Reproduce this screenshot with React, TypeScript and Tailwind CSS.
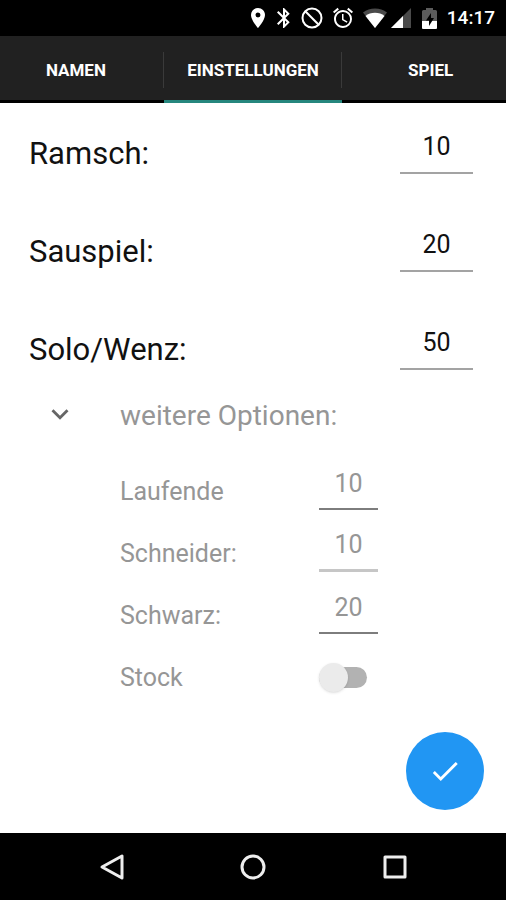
// ReactJS
import { useState } from "react";

// Icons
import { MdAccessAlarm, MdBluetooth, MdCheck, MdKeyboardArrowDown, MdLocationOn } from "react-icons/md";

const TABS = ["NAMEN", "EINSTELLUNGEN", "SPIEL"];

const GAMES = [
    { id: "ramsch", label: "Ramsch:", value: "10" },
    { id: "sauspiel", label: "Sauspiel:", value: "20" },
    { id: "solo", label: "Solo/Wenz:", value: "50" },
];

const OPTIONS = [
    { id: "laufende", label: "Laufende", value: "10", line: "border-b-2 border-[#7d7d7d]" },
    { id: "schneider", label: "Schneider:", value: "10", line: "border-b-3 border-[#c6c6c6]" },
    { id: "schwarz", label: "Schwarz:", value: "20", line: "border-b-2 border-[#7d7d7d]" },
];

function StatusBar() {
    return (
        <header className="flex h-9 items-center justify-end bg-black pr-[11px] text-white">
            <MdLocationOn size={24} className="mr-[2px]" />
            <MdBluetooth size={24} className="mr-[5px]" />
            <svg width="22" height="22" viewBox="0 0 22 22" fill="none" stroke="currentColor" strokeWidth="2" className="mr-[8px]">
                <circle cx="11" cy="11" r="9.5" />
                <path d="M4.3 4.3l13.4 13.4" />
            </svg>
            <MdAccessAlarm size={24} className="mr-[8px]" />
            <svg width="24" height="20" viewBox="0 0 24 20" className="mr-[4px]">
                <path d="M12 20L0 4.600C3.500 2 7.500.5 12 .5s8.500 1.500 12 4.100z" fill="#4a4a4a" />
                <path d="M12 20L2.500 8C5 6 8.500 4.800 12 4.800S19 6 21.500 8z" fill="currentColor" />
            </svg>
            <svg width="20" height="20" viewBox="0 0 20 20" className="mr-[11px]">
                <path d="M0 20L20 0v20z" fill="#4a4a4a" />
                <path d="M0 20L12 8v12z" fill="currentColor" />
            </svg>
            <svg width="15" height="21" viewBox="0 0 15 21" className="mr-[10px]">
                <path d="M0 3.500Q0 2 1.500 2H4V0h7v2h2.500Q15 2 15 3.500V21H0z" fill="#5c5c5c" />
                <path d="M0 13h15v6.500q0 1.500-1.500 1.500h-12Q0 21 0 19.500z" fill="currentColor" />
                <path d="M9 5L4 12.500h3V18l5-8H9z" fill="#000" />
            </svg>
            <span className="text-[19px] leading-6 font-medium">14:17</span>
        </header>
    );
}

export default function App() {
    // States
    const [tab, setTab] = useState("EINSTELLUNGEN");
    const [open, setOpen] = useState(true);
    const [stock, setStock] = useState(false);

    return (
        <div className="flex min-h-screen flex-col bg-white font-[Roboto,sans-serif]">
            <StatusBar />

            <nav className="flex h-[67px] justify-center overflow-hidden bg-[#212121]">
                {TABS.map((name) => (
                    <button
                        key={name}
                        type="button"
                        onClick={() => setTab(name)}
                        className={`flex w-[35%] shrink-0 items-center border-b-3 pt-1 ${name === tab ? "border-[#26877e]" : "border-black"}`}
                    >
                        <span className={`flex h-9 flex-1 items-center justify-center pt-px pl-px text-[17px] font-bold text-white ${name === "SPIEL" ? "" : "border-r border-[#3a3a3a]"}`}>
                            {name}
                        </span>
                    </button>
                ))}
            </nav>

            <main className="flex flex-1 flex-col pt-[17px]">
                <div className="flex flex-col gap-11 pr-[33px] pl-[29px]">
                    {GAMES.map((game) => (
                        <div key={game.id} className="flex items-end justify-between">
                            <label htmlFor={game.id} className="text-[31px] leading-10 text-[#111111]">
                                {game.label}
                            </label>
                            <input
                                id={game.id}
                                inputMode="numeric"
                                defaultValue={game.value}
                                className="h-[54px] w-[73px] border-b-2 border-[#a3a3a3] pt-px text-center text-[25px] text-[#111111] outline-none"
                            />
                        </div>
                    ))}
                </div>

                <div className="mt-[26px] flex items-center gap-7 pl-7">
                    <button
                        type="button"
                        aria-label="weitere Optionen"
                        aria-expanded={open}
                        onClick={() => setOpen(!open)}
                        className="flex w-16 justify-center pb-1 text-[#666666]"
                    >
                        <MdKeyboardArrowDown size={34} />
                    </button>
                    <h2 className="text-[28px] leading-10 text-[#969696]">weitere Optionen:</h2>
                </div>

                {open && (
                    <div className="mt-[22px] flex flex-col gap-[10px] pl-[120px] text-[25px] text-[#969696]">
                        {OPTIONS.map((option) => (
                            <div key={option.id} className="flex items-end">
                                <label htmlFor={option.id} className="w-[199px] leading-9">
                                    {option.label}
                                </label>
                                <input
                                    id={option.id}
                                    inputMode="numeric"
                                    defaultValue={option.value}
                                    className={`h-[52px] w-[59px] text-center outline-none ${option.line}`}
                                />
                            </div>
                        ))}
                        <div className="flex h-[52px] items-end">
                            <label htmlFor="stock" className="w-[199px] leading-9">
                                Stock
                            </label>
                            <input
                                id="stock"
                                type="checkbox"
                                role="switch"
                                checked={stock}
                                onChange={(e) => setStock(e.target.checked)}
                                className="mb-2 flex h-[21px] w-12 appearance-none items-center rounded-full bg-[#b2b2b2] before:size-[29px] before:shrink-0 before:rounded-full before:bg-[#ebebeb] before:shadow-sm checked:justify-end"
                            />
                        </div>
                    </div>
                )}

                <button
                    type="button"
                    aria-label="Speichern"
                    className="mt-auto mr-[22px] mb-[23px] flex size-[78px] items-center justify-center self-end rounded-full bg-[#2196f3] text-white"
                >
                    <MdCheck size={34} />
                </button>
            </main>

            <footer className="flex h-[67px] items-center justify-center bg-black text-[#eeeeee]">
                <button type="button" aria-label="Zurück" className="flex w-[28%] justify-center">
                    <svg width="26" height="28" viewBox="0 0 26 28" fill="none" stroke="currentColor" strokeWidth="3" strokeLinejoin="round">
                        <path d="M24 3v22L4 14z" />
                    </svg>
                </button>
                <button type="button" aria-label="Startseite" className="flex w-[28%] justify-center">
                    <svg width="26" height="26" viewBox="0 0 26 26" fill="none" stroke="currentColor" strokeWidth="3">
                        <circle cx="13" cy="13" r="11" />
                    </svg>
                </button>
                <button type="button" aria-label="Übersicht" className="flex w-[28%] justify-center">
                    <svg width="26" height="26" viewBox="0 0 26 26" fill="none" stroke="currentColor" strokeWidth="3" strokeLinejoin="round">
                        <path d="M3 3h20v20H3z" />
                    </svg>
                </button>
            </footer>
        </div>
    );
}
